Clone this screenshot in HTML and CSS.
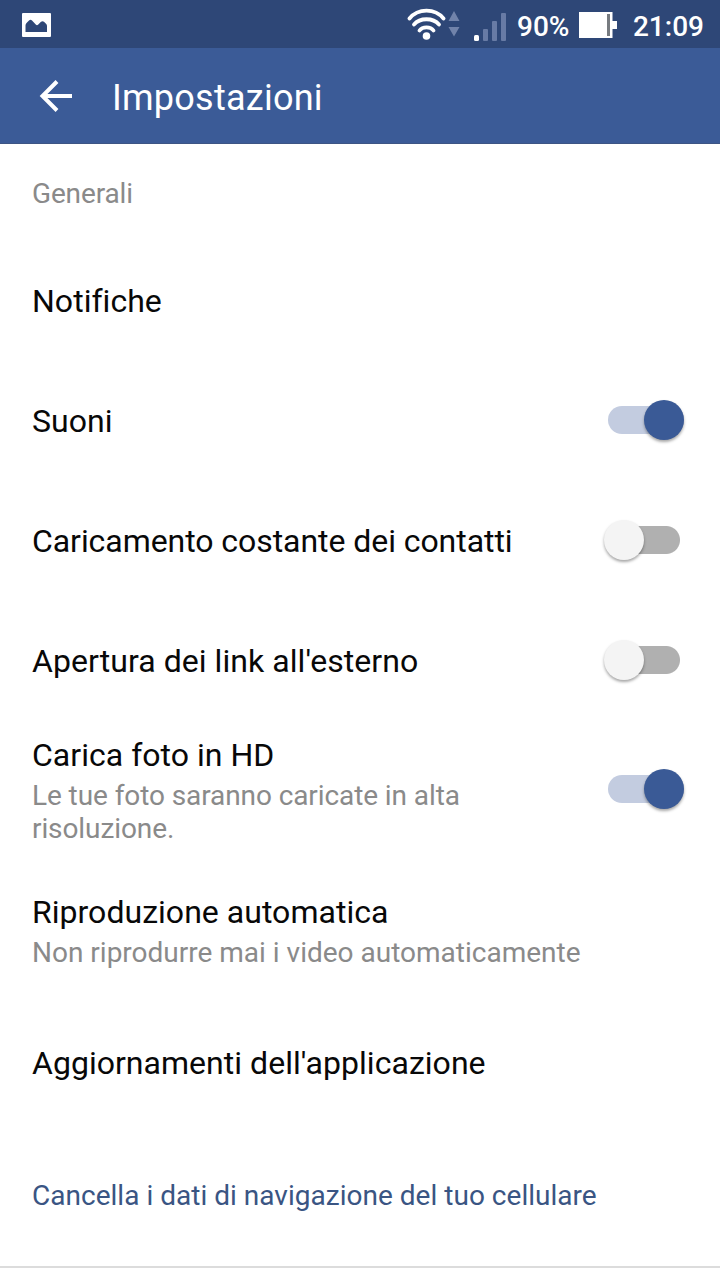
FILE: index.html
```html
<!DOCTYPE html>
<html lang="it">
<head>
<meta charset="utf-8">
<title>Impostazioni</title>
<link rel="stylesheet" href="styles.css">
</head>
<body>
<div class="screen">
<header class="status">
<svg class="picture" width="30" height="24" viewBox="0 0 30 24"><path fill="#fff" fill-rule="evenodd" d="M1 0h27q1 0 1 1v22q0 1-1 1H1q-1 0-1-1V1q0-1 1-1zM3.500 19h21.500v-6q0-1.200-1-2.200l-2-2q-1.500-1-3 0l-3 3q-1 .8-2 0l-4-4.300q-1.500-1.500-3 0L4.500 10q-1 1-1 2.500z"/></svg>
<svg class="wifi" width="54" height="34" viewBox="0 0 54 34"><g fill="none" stroke="#fff" stroke-width="3.800" stroke-linecap="round"><path d="M2.500 11.500C11 1 28 1 36.500 11.500"/><path d="M7 17.500C13 10.500 26 10.500 32 17.500"/><path d="M12.500 23.500C15.500 19.300 23.500 19.300 26.500 23.500"/></g><circle cx="19.500" cy="29" r="3.800" fill="#fff"/><path fill="#7183aa" d="M41.500 14l5.500-10 5.500 10zM41.500 20h11l-5.500 9.500z"/></svg>
<svg class="signal" width="33" height="28" viewBox="0 0 33 28"><rect y="22" width="5" height="6" rx="1.500" fill="#fff"/><g fill="#687ba5"><rect x="9" y="16" width="5" height="12" rx="1"/><rect x="18" y="8" width="5" height="20" rx="1"/><rect x="27" width="5" height="28" rx="1"/></g></svg>
<span class="percent">90%</span>
<svg class="battery" width="38" height="26" viewBox="0 0 38 26"><path fill="#fff" d="M0 0h33.500v9H38v8h-4.500v9H0z"/><path fill="#777b80" d="M28 2h3v22h-3z"/></svg>
<span class="clock">21:09</span>
</header>
<div class="appbar">
<svg class="back" width="34" height="34" viewBox="0 0 34 34"><path fill="none" stroke="#fff" stroke-width="4" d="M33 17H4M18 2.500L3.500 17 18 31.500"/></svg>
<h1>Impostazioni</h1>
</div>
<main>
<h2>Generali</h2>
<div class="row"><span class="title">Notifiche</span></div>
<div class="row"><span class="title">Suoni</span><i class="switch on"></i></div>
<div class="row"><span class="title contacts">Caricamento costante dei contatti</span><i class="switch"></i></div>
<div class="row"><span class="title links">Apertura dei link all'esterno</span><i class="switch"></i></div>
<div class="row photo"><div><div class="title">Carica foto in HD</div><p class="quality">Le tue foto saranno caricate in alta<br>risoluzione.</p></div><i class="switch on"></i></div>
<div class="row video"><div><div class="title">Riproduzione automatica</div><p>Non riprodurre mai i video automaticamente</p></div></div>
<div class="row updates"><span class="title">Aggiornamenti dell'applicazione</span></div>
<a class="clear">Cancella i dati di navigazione del tuo cellulare</a>
</main>
</div>
</body>
</html>
```
FILE: styles.css
```css
* { box-sizing: border-box; }
body { margin: 0; background: #fff; font-family: Roboto, sans-serif; }
.screen { width: 720px; height: 1280px; overflow: hidden; }
.status { height: 48px; background: #2e4777; color: #fff; display: flex; align-items: center; padding: 0 16px 0 22px; }
.picture { margin-top: 1px; }
.wifi { margin-left: 355px; }
.signal { margin: 6px 0 0 13px; }
.percent { margin: 4px 0 0 10px; width: 52px; font-size: 28px; font-weight: 500; white-space: nowrap; }
.battery { margin: 2px 0 0 10px; }
.clock { margin: 4px 0 0 auto; font-size: 28px; font-weight: 500; }
.appbar { height: 96px; background: #3b5b97; color: #fff; display: flex; align-items: center; padding-left: 39px; border-bottom: 1px solid #3d5584; }
.back { margin-top: 1px; }
h1 { margin: 5px 0 0 39px; font-size: 36px; font-weight: 400; line-height: 42px; letter-spacing: .25px; }
h2 { margin: 0; height: 97px; padding: 33px 32px 0; font-size: 28px; font-weight: 400; line-height: 34px; letter-spacing: -.15px; color: #8a8a8a; }
.row { height: 120px; padding: 0 36px 0 32px; display: flex; align-items: center; justify-content: space-between; }
.title { font-size: 32px; line-height: 40px; letter-spacing: .03px; color: #080808; white-space: nowrap; }
.contacts { letter-spacing: -.06px; }
.links { letter-spacing: .06px; }
p { margin: 4px 0 0; font-size: 28px; line-height: 33px; color: #8a8a8a; white-space: nowrap; }
.quality { letter-spacing: -.09px; }
.switch { width: 76px; height: 28px; margin-bottom: 2px; display: flex; align-items: center; background: radial-gradient(circle at 58px 14px, #b0b0b0 13.5px, transparent 14.5px), linear-gradient(#b0b0b0, #b0b0b0) 14px 0 / 44px 28px no-repeat; }
.switch::before { content: ""; width: 40px; height: 40px; flex: none; border-radius: 50%; background: #f4f4f4; box-shadow: 0 2px 3px rgba(0, 0, 0, .35); margin-left: -4px; }
.switch.on { border-radius: 14px; background: #c3cce0; }
.switch.on::before { margin-left: 36px; background: #3a5a96; }
.photo { height: 138px; }
.video { height: 142px; }
.updates { height: 124px; }
.clear { display: block; height: 143px; padding: 54px 32px 0; font-size: 28px; line-height: 34px; letter-spacing: .02px; color: #3a5583; border-bottom: 2px solid #dcdcdc; }
```
